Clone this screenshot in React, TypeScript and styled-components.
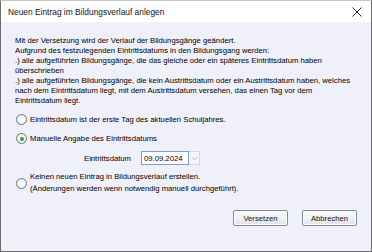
import React, { useState } from 'react';
import styled, { createGlobalStyle } from 'styled-components';

const GlobalStyle = createGlobalStyle`
    html, body {
        margin: 0;
        padding: 0;
        background: #ffffff;
    }
    body {
        font-family: "Liberation Sans", Arial, sans-serif;
    }
`;

type Choice = 'schuljahr' | 'manuell' | 'keiner';

export default function App() {
    const [choice, setChoice] = useState<Choice>('manuell');
    const [datum, setDatum] = useState('09.09.2024');

    return (
        <>
            <GlobalStyle />
            <Window>
                <TitleBar>
                    <Title>Neuen Eintrag im Bildungsverlauf anlegen</Title>
                    <CloseButton type="button" aria-label="Schließen">
                        <svg width="10" height="10" viewBox="0 0 10 10">
                            <path d="M0.5 0.5 L9.5 9.5 M9.5 0.5 L0.5 9.5" stroke="#2b2b2b" strokeWidth="1" />
                        </svg>
                    </CloseButton>
                </TitleBar>
                <Body>
                    <Message>
                        Mit der Versetzung wird der Verlauf der Bildungsgänge geändert.
                        <br />
                        Aufgrund des festzulegenden Eintrittsdatums in den Bildungsgang werden:
                        <br />
                        .) alle aufgeführten Bildungsgänge, die das gleiche oder ein späteres Eintrittsdatum haben
                        <br />
                        überschrieben
                        <br />
                        .) alle aufgeführten Bildungsgänge, die kein Austrittsdatum oder ein Austrittsdatum haben, welches
                        <br />
                        nach dem Eintrittsdatum liegt, mit dem Austrittsdatum versehen, das einen Tag vor dem
                        <br />
                        Eintrittsdatum liegt.
                    </Message>

                    <Options>
                        <Option onClick={() => setChoice('schuljahr')}>
                            <Radio $checked={choice === 'schuljahr'} />
                            <OptionText>Eintrittsdatum ist der erste Tag des aktuellen Schuljahres.</OptionText>
                        </Option>

                        <Option onClick={() => setChoice('manuell')}>
                            <Radio $checked={choice === 'manuell'} />
                            <OptionText>Manuelle Angabe des Eintrittsdatums</OptionText>
                        </Option>

                        <DateRow>
                            <DateLabel>Eintrittsdatum</DateLabel>
                            <DateField>
                                <DateInput value={datum} onChange={(e) => setDatum(e.target.value)} />
                                <DropButton type="button" aria-label="Kalender">
                                    <svg width="7" height="5" viewBox="0 0 7 5">
                                        <path d="M0.5 1 L3.5 4 L6.5 1" fill="none" stroke="#b5b8c0" strokeWidth="1" />
                                    </svg>
                                </DropButton>
                            </DateField>
                        </DateRow>

                        <Option onClick={() => setChoice('keiner')}>
                            <Radio $checked={choice === 'keiner'} />
                            <OptionText>
                                Keinen neuen Eintrag in Bildungsverlauf erstellen.
                                <br />
                                (Änderungen werden wenn notwendig manuell durchgeführt).
                            </OptionText>
                        </Option>
                    </Options>

                    <ButtonRow>
                        <Button type="button">Versetzen</Button>
                        <Button type="button">Abbrechen</Button>
                    </ButtonRow>
                </Body>
            </Window>
        </>
    );
}

const Window = styled.div`
    width: 372px;
    height: 252px;
    box-sizing: border-box;
    border: 1px solid #6b6b6b;
    border-top-color: #c8c8c8;
    background: #f0f0fb;
    display: flex;
    flex-direction: column;
    color: #000;
`;

const TitleBar = styled.div`
    height: 21px;
    flex: none;
    background: #ffffff;
    display: flex;
    align-items: center;
    justify-content: space-between;
    padding: 0 6px 0 7px;
`;

const Title = styled.span`
    font-size: 8.4px;
    color: #111;
    white-space: nowrap;
`;

const CloseButton = styled.button`
    border: none;
    background: transparent;
    padding: 0;
    width: 16px;
    height: 16px;
    display: flex;
    align-items: center;
    justify-content: center;
`;

const Body = styled.div`
    flex: 1;
    display: flex;
    flex-direction: column;
    padding: 14px 8px 0 14px;
`;

const Message = styled.p`
    margin: 0;
    font-size: 7.7px;
    line-height: 10px;
    white-space: nowrap;
`;

const Options = styled.div`
    display: flex;
    flex-direction: column;
    margin-top: 4px;
    padding-left: 1px;
`;

const Option = styled.label`
    display: flex;
    align-items: center;
    gap: 3px;
    min-height: 19px;
    cursor: default;
`;

const Radio = styled.span<{ $checked: boolean }>`
    width: 9px;
    height: 9px;
    flex: none;
    border-radius: 50%;
    border: 1px solid #6f7580;
    background: radial-gradient(circle at 50% 50%, #ffffff 0%, #e7e9ee 100%);
    display: flex;
    align-items: center;
    justify-content: center;

    &::after {
        content: '';
        width: 4px;
        height: 4px;
        border-radius: 50%;
        background: ${(p) => (p.$checked ? '#2aa23a' : 'transparent')};
    }
`;

const OptionText = styled.span`
    font-size: 7.7px;
    line-height: 12px;
    white-space: nowrap;
`;

const DateRow = styled.div`
    display: flex;
    align-items: center;
    gap: 10px;
    padding-left: 68px;
    height: 18px;
    margin: 1px 0 4px;
`;

const DateLabel = styled.span`
    font-size: 7.7px;
`;

const DateField = styled.div`
    display: flex;
    align-items: stretch;
    height: 14px;
`;

const DateInput = styled.input`
    width: 48px;
    box-sizing: border-box;
    border: 1px solid #7a9cd3;
    background: #ffffff;
    font-family: "Liberation Sans", Arial, sans-serif;
    font-size: 7.7px;
    padding: 0 2px;
    outline: none;
`;

const DropButton = styled.button`
    width: 11px;
    box-sizing: border-box;
    border: 1px solid #d5d8de;
    border-left: none;
    background: #f4f5f8;
    padding: 0;
    display: flex;
    align-items: center;
    justify-content: center;
`;

const ButtonRow = styled.div`
    display: flex;
    justify-content: flex-end;
    gap: 14px;
    padding-right: 6px;
    margin-top: 15px;
`;

const Button = styled.button`
    width: 55px;
    height: 16px;
    box-sizing: border-box;
    border: 1px solid #7e8aa2;
    border-radius: 2px;
    background: linear-gradient(180deg, #fbfbfd 0%, #eeeff3 60%, #dfe1e8 100%);
    box-shadow: inset 0 0 0 1px #ffffff;
    font-family: "Liberation Sans", Arial, sans-serif;
    font-size: 7.7px;
    color: #111;
    padding: 0;
`;
